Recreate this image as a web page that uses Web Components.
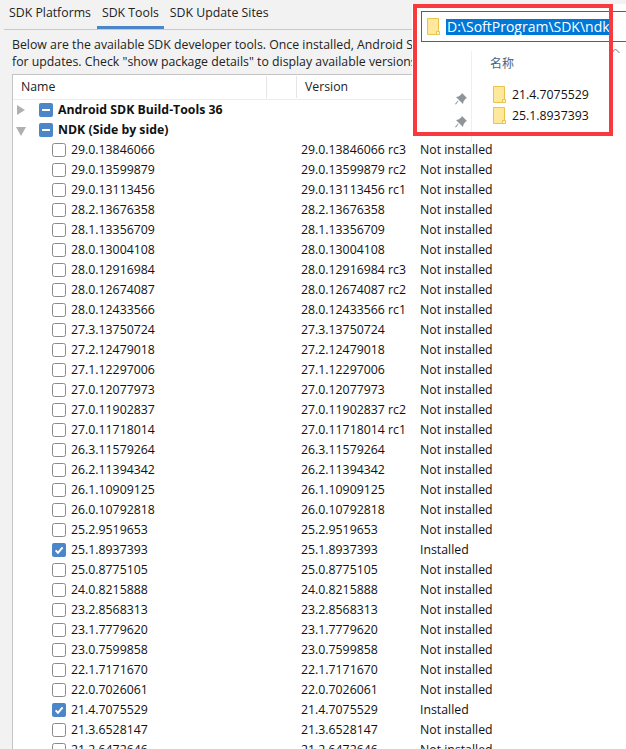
<!DOCTYPE html>
<html>
<head>
<meta charset="utf-8">
<style>
  html, body { margin: 0; padding: 0; height: 749px; overflow: hidden; background: #f2f2f2; }
  body { font: 12.3px "Open Sans", "Noto Sans CJK SC", sans-serif; color: #111; }
</style>
</head>
<body>
<sdk-manager></sdk-manager>
<script>
// name, version, status - status only differs for the two installed ndk's
const NDK = [
  ['29.0.13846066', '29.0.13846066 rc3'], ['29.0.13599879', '29.0.13599879 rc2'], ['29.0.13113456', '29.0.13113456 rc1'],
  ['28.2.13676358', '28.2.13676358'], ['28.1.13356709', '28.1.13356709'], ['28.0.13004108', '28.0.13004108'],
  ['28.0.12916984', '28.0.12916984 rc3'], ['28.0.12674087', '28.0.12674087 rc2'], ['28.0.12433566', '28.0.12433566 rc1'],
  ['27.3.13750724', '27.3.13750724'], ['27.2.12479018', '27.2.12479018'], ['27.1.12297006', '27.1.12297006'],
  ['27.0.12077973', '27.0.12077973'], ['27.0.11902837', '27.0.11902837 rc2'], ['27.0.11718014', '27.0.11718014 rc1'],
  ['26.3.11579264', '26.3.11579264'], ['26.2.11394342', '26.2.11394342'], ['26.1.10909125', '26.1.10909125'],
  ['26.0.10792818', '26.0.10792818'], ['25.2.9519653', '25.2.9519653'], ['25.1.8937393', '25.1.8937393', 1],
  ['25.0.8775105', '25.0.8775105'], ['24.0.8215888', '24.0.8215888'], ['23.2.8568313', '23.2.8568313'],
  ['23.1.7779620', '23.1.7779620'], ['23.0.7599858', '23.0.7599858'], ['22.1.7171670', '22.1.7171670'],
  ['22.0.7026061', '22.0.7026061'], ['21.4.7075529', '21.4.7075529', 1], ['21.3.6528147', '21.3.6528147'],
  ['21.2.6472646', '21.2.6472646']
];

class SdkTab extends HTMLElement {
  constructor() {
    super();
    this.attachShadow({ mode: 'open' });
    this.shadowRoot.innerHTML = `
      <style>
        :host { display: block; height: 26px; padding: 0 5px; line-height: 25px; border-bottom: 3px solid transparent; white-space: nowrap; color: #222; }
        :host([active]) { border-bottom-color: #4a86c8; }
      </style>
      <slot></slot>`;
  }
}

class SdkCheck extends HTMLElement {
  constructor() {
    super();
    this.attachShadow({ mode: 'open' });
  }

  connectedCallback() {
    const state = this.getAttribute('state');
    let inner = '';
    if (state === 'checked') inner = '<path d="M3.6 7.4 6 9.8 10.6 4.4" fill="none" stroke="#fff" stroke-width="2"/>';
    if (state === 'mixed') inner = '<rect x="3" y="6" width="8" height="2" fill="#fff"/>';
    const box = state
      ? '<rect width="14" height="14" rx="2" fill="#4a86c8"/>'
      : '<rect x=".5" y=".5" width="13" height="13" rx="2" fill="#fff" stroke="#8a8a8a"/>';
    this.shadowRoot.innerHTML = `
      <style>
        :host { display: block; width: 14px; height: 14px; flex: none; }
        svg { display: block; }
      </style>
      <svg width="14" height="14" viewBox="0 0 14 14">${box}${inner}</svg>`;
  }
}

class SdkRow extends HTMLElement {
  constructor() {
    super();
    this.attachShadow({ mode: 'open' });
  }

  connectedCallback() {
    const group = this.hasAttribute('group');
    const arrow = this.getAttribute('arrow');
    const tri = arrow === 'down'
      ? '<polygon points="0,2 10,2 5,11" fill="#b0b0b0"/>'
      : '<polygon points="1,0 9,5 1,10" fill="#b0b0b0"/>';
    this.shadowRoot.innerHTML = `
      <style>
        :host { display: grid; grid-template-columns: 288px 119px 1fr; height: 20px; line-height: 20px; white-space: nowrap; }
        .name { display: flex; align-items: center; padding-left: 39px; gap: 5px; }
        :host([group]) .name { padding-left: 3px; font-weight: 700; }
        .arrow { width: 10px; height: 11px; margin-right: 8px; flex: none; }
      </style>
      <div class="name">
        ${group ? `<svg class="arrow" viewBox="0 0 10 11">${tri}</svg>` : ''}
        <sdk-check ${this.getAttribute('state') ? `state="${this.getAttribute('state')}"` : ''}></sdk-check>
        <span><slot></slot></span>
      </div>
      <div>${this.getAttribute('version') || ''}</div>
      <div>${this.getAttribute('status') || ''}</div>`;
  }
}

class SdkTable extends HTMLElement {
  constructor() {
    super();
    this.attachShadow({ mode: 'open' });
    this.shadowRoot.innerHTML = `
      <style>
        :host { display: block; flex: 1; margin-left: 12px; background: #fff; border: 1px solid #c4c4c4; border-width: 1px 0 0 1px; overflow: hidden; }
        .head { display: grid; grid-template-columns: 254px 30px 1fr; height: 24px; align-items: center; border-bottom: 1px solid #ececec; color: #222; }
        .head div { padding-left: 8px; height: 22px; line-height: 22px; border-right: 1px solid #e6e6e6; }
        .head div:last-child { border-right: 0; }
      </style>
      <div class="head"><div>Name</div><div></div><div>Version</div></div>
      <slot></slot>`;
  }
}

class FolderIcon extends HTMLElement {
  constructor() {
    super();
    this.attachShadow({ mode: 'open' });
    this.shadowRoot.innerHTML = `
      <style>
        :host { display: block; width: 13px; height: 17px; flex: none; }
        svg { display: block; }
      </style>
      <svg width="13" height="17" viewBox="0 0 13 17">
        <path d="M.5.5H11.5V13.5H9.5V16.5H.5Z" fill="#ffe89c" stroke="#e8c44f"/>
        <path d="M9.5 16.5V13.5H12.5V16.5Z" fill="#fff6d0" stroke="#e8c44f"/>
      </svg>`;
  }
}

class FolderPopup extends HTMLElement {
  constructor() {
    super();
    this.attachShadow({ mode: 'open' });
    this.shadowRoot.innerHTML = `
      <style>
        :host { display: block; position: absolute; left: 412px; top: 4px; right: 0; height: 139px; background: #fff; color: #111; }
        .red { position: absolute; left: 1px; top: 0; width: 192px; height: 124px; border: 4px solid #f93a3d; pointer-events: none; }
        .input { box-sizing: border-box; display: flex; align-items: center; gap: 6px; margin: 7px 0 0 9px; height: 31px; padding-left: 5px; border: 1px solid #0078d7; border-right: 0; font-size: 14px; }
        .input span { background: #0078d7; color: #fff; line-height: 16px; height: 16px; padding: 0 1px; white-space: nowrap; }
        .body { display: grid; grid-template-columns: 60px 1fr; height: 92px; margin-top: 9px; }
        .pins { display: flex; flex-direction: column; align-items: flex-end; gap: 11px; padding: 42px 4px 0 0; border-right: 1px solid #efefef; }
        .pins svg { display: block; }
        .list { display: flex; flex-direction: column; gap: 5px; padding-left: 18px; }
        .title { color: #4c607a; font-size: 12px; height: 26px; line-height: 24px; margin-bottom: 4px; font-family: "Noto Sans CJK SC", sans-serif; }
        .item { display: flex; align-items: center; gap: 6px; height: 16px; padding-left: 3px; }
        .chev { position: absolute; left: 199px; top: 44px; }
      </style>
      <div class="input"><folder-icon></folder-icon><span>D:\\SoftProgram\\SDK\\ndk</span></div>
      <div class="body">
        <div class="pins">
          <svg width="12" height="12" viewBox="0 0 12 12"><path d="M7 0 12 5 10.5 5.8 8.5 8.5 8 11 1 4 3.5 3.5 6.2 1.5ZM3.5 8 1 11.5 0 11 3 7.5Z" fill="#8f949a" transform="translate(0 0)"/></svg>
          <svg width="12" height="12" viewBox="0 0 12 12"><path d="M7 0 12 5 10.5 5.8 8.5 8.5 8 11 1 4 3.5 3.5 6.2 1.5ZM3.5 8 1 11.5 0 11 3 7.5Z" fill="#8f949a"/></svg>
        </div>
        <div class="list">
          <div class="title">名称</div>
          <div class="item"><folder-icon></folder-icon><span>21.4.7075529</span></div>
          <div class="item"><folder-icon></folder-icon><span>25.1.8937393</span></div>
        </div>
      </div>
      <svg class="chev" width="10" height="6" viewBox="0 0 10 6"><path d="M.5 5 4.5 1 8.5 5" fill="none" stroke="#777"/></svg>
      <div class="red"></div>`;
  }
}

class SdkManager extends HTMLElement {
  constructor() {
    super();
    this.attachShadow({ mode: 'open' });
  }

  connectedCallback() {
    const rows = NDK.map(([name, version, on]) =>
      `<sdk-row ${on ? 'state="checked"' : ''} version="${version}" status="${on ? 'Installed' : 'Not installed'}">${name}</sdk-row>`
    ).join('');
    this.shadowRoot.innerHTML = `
      <style>
        :host { display: flex; flex-direction: column; position: relative; width: 626px; height: 749px; overflow: hidden; }
        .tabs { display: flex; gap: 1px; height: 29px; margin-left: 4px; border-bottom: 1px solid #c9c9c9; box-sizing: content-box; }
        .desc { margin: 6px 0 4px 12px; line-height: 17px; white-space: nowrap; color: #222; height: 34px; }
      </style>
      <div class="tabs">
        <sdk-tab>SDK Platforms</sdk-tab>
        <sdk-tab active>SDK Tools</sdk-tab>
        <sdk-tab>SDK Update Sites</sdk-tab>
      </div>
      <div class="desc">Below are the available SDK developer tools. Once installed, Android Studio will automatically check<br>for updates. Check "show package details" to display available versions of an SDK Tool.</div>
      <sdk-table>
        <sdk-row group arrow="right" state="mixed">Android SDK Build-Tools 36</sdk-row>
        <sdk-row group arrow="down" state="mixed">NDK (Side by side)</sdk-row>
        ${rows}
      </sdk-table>
      <folder-popup></folder-popup>`;
  }
}

customElements.define('sdk-tab', SdkTab);
customElements.define('sdk-check', SdkCheck);
customElements.define('sdk-row', SdkRow);
customElements.define('sdk-table', SdkTable);
customElements.define('folder-icon', FolderIcon);
customElements.define('folder-popup', FolderPopup);
customElements.define('sdk-manager', SdkManager);
</script>
</body>
</html>
